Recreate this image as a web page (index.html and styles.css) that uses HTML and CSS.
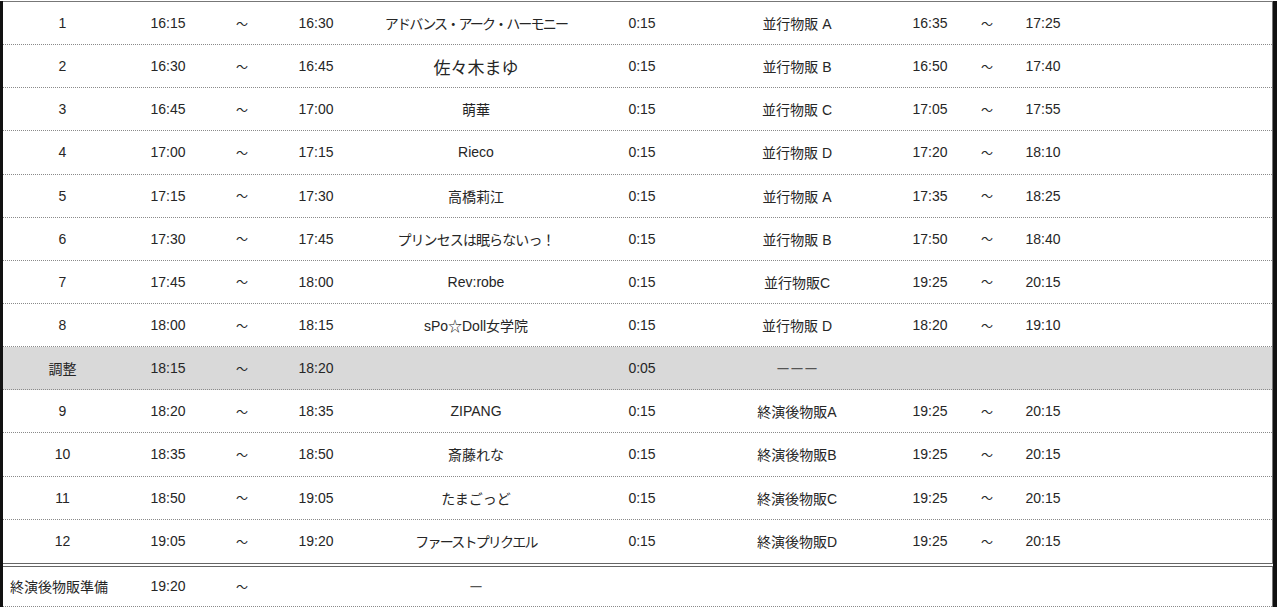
FILE: index.html
```html
<!DOCTYPE html>
<html lang="ja">
<head>
<meta charset="utf-8">
<title>タイムテーブル</title>
<link rel="stylesheet" href="styles.css">
</head>
<body>
<div class="frame">
  <div class="sheet main">
    <div class="row"><span>1</span><span>16:15</span><span class="t">〜</span><span>16:30</span><span class="kana tight">アドバンス・アーク・ハーモニー</span><span>0:15</span><span>並行物販 A</span><span>16:35</span><span class="t">〜</span><span>17:25</span><span></span></div>
    <div class="row"><span>2</span><span>16:30</span><span class="t">〜</span><span>16:45</span><span class="big">佐々木まゆ</span><span>0:15</span><span>並行物販 B</span><span>16:50</span><span class="t">〜</span><span>17:40</span><span></span></div>
    <div class="row"><span>3</span><span>16:45</span><span class="t">〜</span><span>17:00</span><span>萌華</span><span>0:15</span><span>並行物販 C</span><span>17:05</span><span class="t">〜</span><span>17:55</span><span></span></div>
    <div class="row"><span>4</span><span>17:00</span><span class="t">〜</span><span>17:15</span><span>Rieco</span><span>0:15</span><span>並行物販 D</span><span>17:20</span><span class="t">〜</span><span>18:10</span><span></span></div>
    <div class="row"><span>5</span><span>17:15</span><span class="t">〜</span><span>17:30</span><span>高橋莉江</span><span>0:15</span><span>並行物販 A</span><span>17:35</span><span class="t">〜</span><span>18:25</span><span></span></div>
    <div class="row"><span>6</span><span>17:30</span><span class="t">〜</span><span>17:45</span><span class="kana">プリンセスは眠らないっ！</span><span>0:15</span><span>並行物販 B</span><span>17:50</span><span class="t">〜</span><span>18:40</span><span></span></div>
    <div class="row"><span>7</span><span>17:45</span><span class="t">〜</span><span>18:00</span><span>Rev:robe</span><span>0:15</span><span>並行物販C</span><span>19:25</span><span class="t">〜</span><span>20:15</span><span></span></div>
    <div class="row"><span>8</span><span>18:00</span><span class="t">〜</span><span>18:15</span><span>sPo☆Doll女学院</span><span>0:15</span><span>並行物販 D</span><span>18:20</span><span class="t">〜</span><span>19:10</span><span></span></div>
    <div class="row gray"><span>調整</span><span>18:15</span><span class="t">〜</span><span>18:20</span><span></span><span>0:05</span><span class="dash">ーーー</span><span></span><span></span><span></span><span></span></div>
    <div class="row"><span>9</span><span>18:20</span><span class="t">〜</span><span>18:35</span><span>ZIPANG</span><span>0:15</span><span>終演後物販A</span><span>19:25</span><span class="t">〜</span><span>20:15</span><span></span></div>
    <div class="row"><span>10</span><span>18:35</span><span class="t">〜</span><span>18:50</span><span>斎藤れな</span><span>0:15</span><span>終演後物販B</span><span>19:25</span><span class="t">〜</span><span>20:15</span><span></span></div>
    <div class="row"><span>11</span><span>18:50</span><span class="t">〜</span><span>19:05</span><span>たまごっど</span><span>0:15</span><span>終演後物販C</span><span>19:25</span><span class="t">〜</span><span>20:15</span><span></span></div>
    <div class="row last"><span>12</span><span>19:05</span><span class="t">〜</span><span>19:20</span><span class="kana tight">ファーストプリクエル</span><span>0:15</span><span>終演後物販D</span><span>19:25</span><span class="t">〜</span><span>20:15</span><span></span></div>
  </div>
  <div class="sheet foot">
    <div class="row end"><span class="lead">終演後物販準備</span><span>19:20</span><span class="t">〜</span><span></span><span class="dash">ー</span><span></span><span></span><span></span><span></span><span></span><span></span></div>
  </div>
</div>
</body>
</html>
```
FILE: styles.css
```css
html, body {
  margin: 0;
  padding: 0;
  background: #fff;
}
body {
  font-family: "Liberation Sans", "Noto Sans CJK JP", sans-serif;
  font-size: 14px;
  color: #262626;
  padding-top: 1px;
}
.frame {
  width: 1277px;
  border-left: 3px solid #111;
  border-right: 4px solid #111;
  box-sizing: border-box;
  display: flex;
  flex-direction: column;
  gap: 2px;
}
.sheet {
  border-right: 1px solid #777;
}
.main {
  border-top: 1px solid #777;
  border-bottom: 1px solid #666;
}
.foot {
  border-top: 1px solid #666;
}
.row {
  display: grid;
  grid-template-columns: 119px 92px 56px 92px 228px 104px 206px 60px 54px 58px 1fr;
  height: 43.15px;
  box-sizing: border-box;
  border-bottom: 1px dotted #8a8a8a;
  align-items: center;
}
.row > span {
  text-align: center;
  white-space: nowrap;
}
.row.last {
  border-bottom: none;
}
.row.gray {
  background: #d9d9d9;
}
.row.end {
  height: 40px;
}
.row > .lead {
  text-align: left;
  padding-left: 7px;
  font-family: "Noto Sans CJK JP", sans-serif;
}
.t {
  font-family: "Noto Sans CJK JP", sans-serif;
  font-size: 12px;
}
.kana {
  letter-spacing: -0.9px;
}
.kana.tight {
  letter-spacing: -1.8px;
}
.big {
  font-size: 17px;
}
.dash {
  font-family: "Noto Sans CJK JP", sans-serif;
  color: #555;
}
```
